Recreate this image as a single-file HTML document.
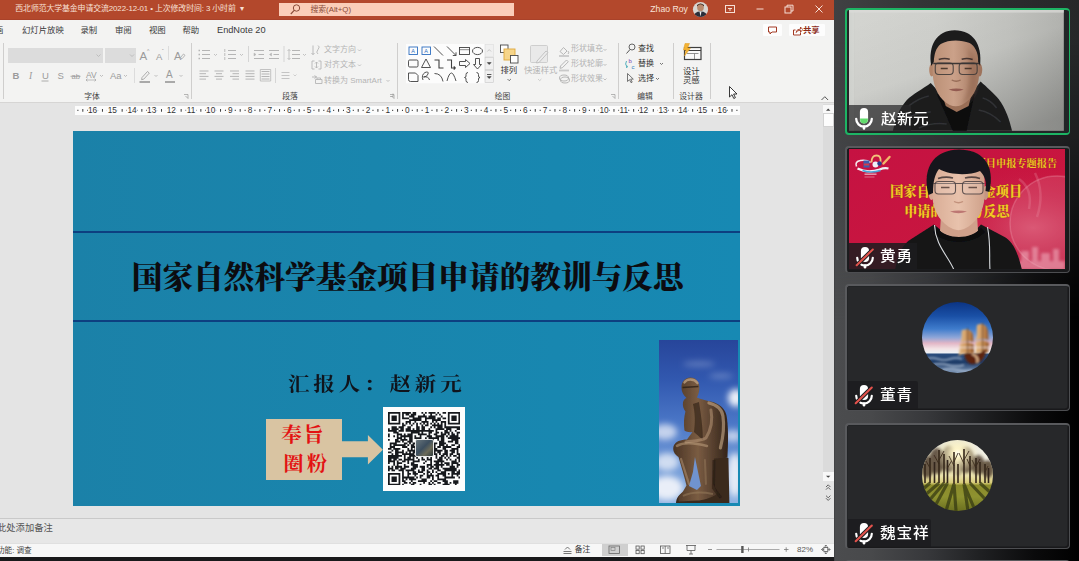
<!DOCTYPE html>
<html lang="zh-CN">
<head>
<meta charset="utf-8">
<title>西北师范大学基金申请交流2022-12-01</title>
<style>
*{box-sizing:border-box;margin:0;padding:0}
html,body{width:1079px;height:561px;overflow:hidden;background:#2a2b2d}
body{position:relative;font-family:"Liberation Sans","Noto Sans CJK SC",sans-serif;font-size:8.5px;color:#333;line-height:1}
.abs{position:absolute}
#ppt{position:absolute;left:0;top:0;width:833.800px;height:556.500px;background:#e4e4e4;overflow:hidden}
#titlebar{position:absolute;left:0;top:0;width:834px;height:19.700px;background:#b3482c;border-bottom:1px solid #a9422a}
#titlebar .t{position:absolute;left:15.300px;top:5.200px;color:#f8e0d6;font-size:7.9px;white-space:nowrap;letter-spacing:-0.1px}
#search{position:absolute;left:278.5px;top:2.5px;width:235px;height:13.800px;background:#fbceb9}
#search span{position:absolute;left:32px;top:3px;font-size:7.8px;color:#8a4b38;white-space:nowrap}
#tabs{position:absolute;left:0;top:19.5px;width:834px;height:21px;background:#f3f3f2}
#tabs span{position:absolute;top:6px;font-size:8.4px;color:#3a3a3a;white-space:nowrap}
#ribbon{position:absolute;left:0;top:40px;width:834px;height:63px;background:#f3f3f2;border-bottom:1px solid #d6d5d4}
.sep{position:absolute;width:1px;background:#cfcecd;top:43px;height:56px}
.glabel{position:absolute;top:93.200px;font-size:7.8px;color:#444;white-space:nowrap;transform:translateX(-50%)}
.dis{color:#b4b4b4}
.rt{position:absolute;font-size:8px;white-space:nowrap}
#slide{position:absolute;left:73px;top:130.500px;width:667px;height:375px;background:linear-gradient(90deg,#1b81a8 0%,#1985ad 45%,#1789b3 100%);overflow:hidden}
#slide .ln{position:absolute;left:0;width:667px;height:2px;background:#0d3f80}
#stitle{position:absolute;left:0;top:0;white-space:nowrap;font-family:"Liberation Serif","Noto Serif CJK SC",serif;font-weight:900;color:#0c0c10}
#rep{position:absolute;white-space:nowrap;font-family:"Liberation Serif","Noto Serif CJK SC",serif;font-weight:700;color:#10141c}
#panel{position:absolute;left:834px;top:0;width:245px;height:561px;background:linear-gradient(90deg,#3e3f41 0,#4b4c4e 1.5px,#48494b 15%,#37383b 38%,#1f2022 60%,#0a0a0b 82%,#000 100%)}
#pov{position:absolute;left:0;top:0;width:245px;height:320px;background:linear-gradient(90deg,#404143 0,#333436 35%,#2b2c2e 70%,#262729 100%);-webkit-mask-image:linear-gradient(180deg,#000 0,#000 40px,rgba(0,0,0,.75) 140px,rgba(0,0,0,.35) 230px,transparent 320px);mask-image:linear-gradient(180deg,#000 0,#000 40px,rgba(0,0,0,.75) 140px,rgba(0,0,0,.35) 230px,transparent 320px)}
.tile{position:absolute;left:11.300px;width:224.500px;height:126.800px;border-style:solid;border-width:2.500px 1.300px 1.300px 2.500px;border-color:#595a5d #4d4e51 #4d4e51 #595a5d;border-radius:4px;background:#27282a;overflow:hidden;box-shadow:inset -1.500px -1.500px 0 0 #19191b,inset 0.500px 0.500px 0 0 #1f2022}
.nm{position:absolute;left:2px;bottom:2px;height:27px;background:rgba(28,28,30,.86);color:#fff;font-size:14.6px;font-weight:500;white-space:nowrap}
.nm span{position:absolute;left:33px;top:6px;font-size:14.400px;letter-spacing:.8px;transform:scaleX(1.09);transform-origin:0 50%}
.nm svg{position:absolute;left:6px;top:4px}
.av{position:absolute;left:74.900px;width:71px;height:71px;border-radius:50%;overflow:hidden}
.redt{font-family:"Liberation Serif","Noto Serif CJK SC",serif;font-weight:700;color:#e31212;font-size:19.5px;letter-spacing:3px;white-space:nowrap}
.gold{font-family:"Liberation Serif","Noto Serif CJK SC",serif;color:#f3c626;white-space:nowrap;text-shadow:0 0 1px #7a3a10}
.rn{position:absolute;top:106.100px;font-size:8.300px;color:#333;transform:translateX(-50%);white-space:nowrap;background:#fcfcfc;padding:0 .5px;z-index:2}
</style>
</head>
<body>
<div id="ppt">
  <div id="titlebar">
    <div class="t">西北师范大学基金申请交流2022-12-01 • 上次修改时间: 3 小时前 &nbsp;▾</div>
    <div id="search"><span>搜索(Alt+Q)</span></div>
    <svg class="abs" style="left:287px;top:2px" width="16" height="15" viewBox="0 0 16 15"><circle cx="9.500" cy="6" r="3.200" fill="none" stroke="#8a4b38" stroke-width="1"/><path d="M7.200 8.400L3.800 12" stroke="#8a4b38" stroke-width="1.100"/></svg>
<div class="abs" style="left:650.300px;top:4.800px;font-size:8.700px;color:#f8e2d8;white-space:nowrap">Zhao Roy</div>
<svg class="abs" style="left:692px;top:1px" width="17" height="17" viewBox="0 0 17 17">
  <defs><clipPath id="avc"><circle cx="8.500" cy="8.500" r="7.600"/></clipPath></defs>
  <g clip-path="url(#avc)"><rect width="17" height="17" fill="#d9d6d2"/><ellipse cx="8.500" cy="6.500" rx="3.300" ry="3.800" fill="#b98a6e"/><path d="M5 5.500q3.500-4.500 7 0v-1.500q-3.500-3-7 0z" fill="#3a2a22"/><path d="M1.500 17q0-6.500 7-6.500t7 6.500z" fill="#2b2e3a"/><path d="M7.500 10.500l1 5l1-5z" fill="#f0f0f0"/></g>
</svg>
<svg class="abs" style="left:724px;top:3px" width="12" height="12" viewBox="0 0 12 12"><rect x="1.500" y="2.500" width="9" height="7" fill="none" stroke="#f6ded5" stroke-width="1"/><path d="M4 5.500h4M6 5.500v2.500" stroke="#f6ded5" stroke-width="1"/></svg>
<svg class="abs" style="left:754px;top:3px" width="12" height="12" viewBox="0 0 12 12"><path d="M2.500 6h7" stroke="#f6ded5" stroke-width="1"/></svg>
<svg class="abs" style="left:783px;top:3px" width="12" height="12" viewBox="0 0 12 12"><rect x="2" y="4" width="6" height="6" fill="none" stroke="#f6ded5" stroke-width="1"/><path d="M4 4V2.200h6V8H8" fill="none" stroke="#f6ded5" stroke-width="1"/></svg>
<svg class="abs" style="left:813px;top:3px" width="12" height="12" viewBox="0 0 12 12"><path d="M2.500 2.500l7 7M9.500 2.500l-7 7" stroke="#f6ded5" stroke-width="1"/></svg>

  </div>
  <div id="tabs">
    <span style="left:-5px">画</span>
    <span style="left:22px">幻灯片放映</span>
    <span style="left:80.5px">录制</span>
    <span style="left:115px">审阅</span>
    <span style="left:149px">视图</span>
    <span style="left:182.5px">帮助</span>
    <span style="left:217px;font-size:9.2px;top:6.200px">EndNote 20</span>
    <div class="abs" style="left:763px;top:4.500px;width:18.600px;height:12.300px;background:#fdfdfd;border-radius:1px"></div>
<svg class="abs" style="left:766.500px;top:6.500px" width="11" height="9" viewBox="0 0 11 9"><path d="M1.500 1h8v5h-4.500l-2 2v-2h-1.500z" fill="none" stroke="#a33a24" stroke-width="1"/></svg>
<div class="abs" style="left:788.600px;top:4.500px;width:36.300px;height:12.300px;background:#fdfdfd;border-radius:1px"></div>
<svg class="abs" style="left:791.500px;top:6px" width="11" height="10" viewBox="0 0 11 10"><path d="M3.500 4h-2v5h7v-2.500" fill="none" stroke="#a33a24" stroke-width="1"/><path d="M4 6.500q.5-3.500 4.500-3.500v-2l2.300 2.600l-2.300 2.600v-2q-3 0-4.500 2.300z" fill="none" stroke="#a33a24" stroke-width=".9"/></svg>
<span style="left:803px;top:6.200px;color:#8f2f1c;font-weight:700;font-size:8.400px">共享</span>

  </div>
  <div id="ribbon"></div>
  <!-- separators -->
<div class="sep" style="left:3px"></div><div class="sep" style="left:191px"></div><div class="sep" style="left:397px"></div><div class="sep" style="left:618px"></div><div class="sep" style="left:672.500px"></div><div class="sep" style="left:709.500px"></div>
<!-- font group -->
<div class="abs" style="left:8px;top:48px;width:95px;height:14.500px;background:#dcdcdc"></div>
<div class="abs" style="left:104.500px;top:48px;width:31.500px;height:14.500px;background:#dcdcdc"></div>
<svg class="abs" style="left:0;top:40px" width="834" height="64" viewBox="0 40 834 64" fill="none" stroke-linecap="butt">
  <g stroke="#b9b9b9" stroke-width=".9">
    <path d="M96.500 54.500l2 2l2-2M130 54.500l2 2l2-2"/>
  </g>
  <!-- bullets / numbering / indents / line spacing -->
  <g stroke="#b5b5b5" stroke-width="1">
    <path d="M202 50.500h8M202 54.500h8M202 58.500h8"/><path d="M198.500 50.500h1.500M198.500 54.500h1.500M198.500 58.500h1.500" stroke-width="1.600"/>
    <path d="M214 54l1.500 1.500l1.500-1.500" stroke-width=".8"/>
    <path d="M228 50.500h8M228 54.500h8M228 58.500h8"/><path d="M224.800 49v3M224.800 53v3M224.800 57v3" stroke-width=".9"/>
    <path d="M240 54l1.500 1.500l1.500-1.500" stroke-width=".8"/>
    <path d="M248.500 46v16" stroke="#d5d5d5"/>
    <path d="M254 50.500h10M258.500 54.500h5.500M254 58.500h10"/><path d="M254 53l2 1.500l-2 1.500z" fill="#b5b5b5" stroke-width=".5"/>
    <path d="M269 50.500h10M273.500 54.500h5.500M269 58.500h10"/><path d="M271.500 53l-2 1.500l2 1.500z" fill="#b5b5b5" stroke-width=".5"/>
    <path d="M284 46v16" stroke="#d5d5d5"/>
    <path d="M292 50.500h8M292 54.500h8M292 58.500h8"/><path d="M289 49.500v10M287.500 51l1.500-1.500l1.500 1.500M287.500 58l1.500 1.500l1.500-1.500" stroke-width=".8"/>
    <path d="M303 54l1.500 1.500l1.500-1.500" stroke-width=".8"/>
    <!-- alignment row -->
    <path d="M199.500 71h9M199.500 73.700h6.500M199.500 76.400h9M199.500 79.100h6.500"/>
    <path d="M214.500 71h9M216 73.700h6M214.500 76.400h9M216 79.100h6"/>
    <path d="M230 71h9M232.500 73.700h6.500M230 76.400h9M232.500 79.100h6.500"/>
    <path d="M245.500 71h9M245.500 73.700h9M245.500 76.400h9M245.500 79.100h9"/>
    <path d="M261.500 71.500h8M261.500 74h8M261.500 76.500h8M261.500 79h8"/><path d="M260.300 69.500h10.400M260.300 81h10.400M260.300 69.500v11.500M270.700 69.500v11.500" stroke-width=".8"/>
    <path d="M275.500 68v15" stroke="#d5d5d5"/>
    <path d="M281.500 72.500h8M281.500 75.500h8M281.500 78.500h8" stroke="#c4c4c4"/><path d="M293.500 74.500l1.500 1.500l1.500-1.500" stroke-width=".8" stroke="#c4c4c4"/>
    <!-- text direction icons -->
    <path d="M313 45.500v9M311.500 53l1.500 1.700l1.500-1.700M318 45.500q2.500 1 0 4q-2.500 3 0 4.500" stroke-width=".9"/>
    <path d="M312 61v8h2.500M321 61v8h-2.500M312 61h2.500M321 61h-2.500M316.500 62v6M315 63.500l1.500-1.500l1.500 1.500M315 66.500l1.500 1.500l1.500-1.500" stroke-width=".9"/>
    <path d="M312 77h5M314.500 75.500l2 1.500l-2 1.500M315.500 79.500h6.500v4h-6.500zM317 79.500v-1.500h3.500v1.500" stroke-width=".9"/>
    <path d="M358 49.500l1.500 1.500l1.500-1.500M358 64.500l1.500 1.500l1.500-1.500M386.500 80l1.500 1.500l1.500-1.500" stroke-width=".8"/>
  </g>
  <!-- dialog launchers -->
  <g stroke="#9a9a9a" stroke-width=".7">
    <path d="M184 94.500h4v4M185.500 96l2.500 2.500M393 96.500h-3M393 96.500v-3" />
    <path d="M390 94.500h4v4M391.500 96l2.500 2.500"/>
    <path d="M611 94.500h4v4M612.500 96l2.500 2.500"/>
  </g>
  <!-- font group icons row1 -->
  <g fill="#9b9b9b" stroke="none" font-family="Liberation Sans,sans-serif">
    <text x="139.500" y="59.500" font-size="11.500">A</text><text x="147" y="52.500" font-size="5">^</text>
    <text x="156" y="59.500" font-size="9.500">A</text><text x="162" y="52.500" font-size="5">ˇ</text>
    <text x="174" y="59.500" font-size="11">A</text>
    <text x="12.500" y="79" font-size="9.500" font-weight="700">B</text>
    <text x="29" y="79" font-size="9.500" font-style="italic" font-family="Liberation Serif,serif">I</text>
    <text x="42" y="79" font-size="9.500">U</text>
    <text x="57.500" y="79" font-size="9.500">S</text>
    <text x="71.500" y="79" font-size="7.500">ab</text>
    <text x="86" y="77.500" font-size="8.500">AV</text>
    <text x="110" y="79" font-size="9.500">Aa</text>
    <text x="166" y="78" font-size="10">A</text>
  </g>
  <g stroke="#9b9b9b" stroke-width=".8">
    <path d="M168.500 46v14" stroke="#d5d5d5"/>
    <path d="M180.500 57.500l3-3.500l1.500 1.300l-3 3.500z" stroke-width=".7"/>
    <path d="M41.500 81h7"/><path d="M70.500 76.300h10"/><path d="M86 80h10M87.500 78.700l-1.500 1.300l1.500 1.300M94.500 78.700l1.500 1.300l-1.500 1.300" stroke-width=".6"/>
    <path d="M100 75l1.500 1.500l1.500-1.500M124 75l1.500 1.500l1.500-1.500M154.500 75l1.500 1.500l1.500-1.500M179.500 75l1.500 1.500l1.500-1.500" stroke-width=".8" stroke="#b0b0b0"/>
    <path d="M134.500 68v15" stroke="#d5d5d5"/>
    <path d="M142 77.500l5.500-6l1.800 1.600l-5.500 6l-2.200.6z" stroke-width=".8"/>
  </g>
  <rect x="139.500" y="81" width="10.500" height="2" fill="#a9a9a9"/>
  <rect x="165" y="81" width="10" height="2" fill="#a9a9a9"/>
  <!-- shapes gallery -->
  <rect x="406" y="44" width="87.500" height="39.300" fill="#fcfcfc"/>
  <rect x="485" y="44.500" width="8.300" height="12.300" fill="#f0f0f0" stroke="#dadada" stroke-width=".6"/>
  <rect x="485" y="57.400" width="8.300" height="12.300" fill="#f0f0f0" stroke="#c6c6c6" stroke-width=".6"/>
  <rect x="485" y="70.300" width="8.300" height="12.300" fill="#f0f0f0" stroke="#c6c6c6" stroke-width=".6"/>
  <path d="M487.300 51.500l1.900-1.900l1.900 1.900" stroke="#c4c4c4" stroke-width=".9"/>
  <path d="M487.300 62.600l1.900 1.900l1.900-1.900z" fill="#444" stroke="#444" stroke-width=".6"/>
  <path d="M487 74.500h4.400" stroke="#444" stroke-width=".9"/><path d="M487.300 76.600l1.900 1.900l1.900-1.900z" fill="#444" stroke="#444" stroke-width=".6"/>
  <g stroke="#3f3f3f" stroke-width=".9">
    <rect x="409" y="47" width="8.500" height="7.500" stroke="#2f6fc0"/><rect x="422" y="47" width="8.500" height="7.500" stroke="#2f6fc0"/>
    <path d="M434 46.500l9 9M447 46.500l9 9M456 55.500v-3.200M456 55.500h-3.200"/>
    <rect x="459.500" y="47.500" width="10" height="7"/><path d="M459.500 49.700h10" stroke-width=".6"/>
    <ellipse cx="477.500" cy="51" rx="5" ry="3.600"/>
    <rect x="408.500" y="60" width="9.500" height="7" rx="1.200"/>
    <path d="M426 59l4.500 8.500h-9z"/>
    <path d="M434.500 60h4.500v8h4.500" stroke-width="1.100"/>
    <path d="M447 60h4.500v8h4M455.500 68l-1.800-1.500M455.500 68l-1.800 1.500" stroke-width="1.100"/>
    <path d="M459.500 61.500h6v-2l4.500 4l-4.500 4v-2h-6z"/>
    <path d="M475.500 58.500h4v6h2l-4 4.500l-4-4.500h2z"/>
    <path d="M408.500 73h7l2.500 2.500v6h-7.500q-2 0-2-2z"/>
    <path d="M423 80q-2-5 2-7.500q4-1.500 3 1.500q-1 3-4.500 3q5-1 6 3"/>
    <path d="M434.500 73.500q7 0 8.500 8"/>
    <path d="M447 81q2-8 4.500-8q2 0 4.500 8"/>
    <path d="M468 72.500q-2 0-2 2v1.500q0 1.500-1.500 1.500q1.500 0 1.500 1.500v1.500q0 2 2 2"/>
    <path d="M476.500 72.500q2 0 2 2v1.500q0 1.500 1.500 1.500q-1.500 0-1.500 1.500v1.500q0 2-2 2"/>
  </g>
  <text x="411.200" y="53" font-size="5.500" fill="#2f6fc0" stroke="none" font-family="Liberation Sans,sans-serif">A</text>
  <text x="424.300" y="53" font-size="5.500" fill="#2f6fc0" stroke="none" font-family="Liberation Sans,sans-serif">A</text>
  <!-- arrange icon -->
  <rect x="500.500" y="45" width="7.500" height="7.500" fill="#fdfdfd" stroke="#4a4a4a" stroke-width=".9"/>
  <rect x="504" y="49" width="11" height="11" fill="#f6d58a" stroke="#e0a83a" stroke-width=".9"/>
  <rect x="510.500" y="55.500" width="7.500" height="7.500" fill="#fdfdfd" stroke="#4a4a4a" stroke-width=".9"/>
  <path d="M507.500 79l1.700 1.700l1.700-1.700" stroke="#555" stroke-width=".8"/>
  <!-- quick styles -->
  <rect x="530.500" y="45.500" width="17" height="17" rx="1" fill="#e9e9e9" stroke="#c9c9c9" stroke-width=".9"/>
  <path d="M537 61l9-10l2 1.500l-9 10l-2.500 .5z" fill="#ececec" stroke="#bdbdbd" stroke-width=".9"/>
  <path d="M538 79l1.700 1.700l1.700-1.700" stroke="#c4c4c4" stroke-width=".8"/>
  <!-- shape fill/outline/effects icons -->
  <g stroke="#b0b0b0" stroke-width=".9">
    <path d="M560 51.500l3.500-4l3.500 3.500l-3.500 3.500zM568 51q1.500 2 0 3"/><path d="M559 56h10" stroke-width="1.800" stroke="#c9c9c9"/>
    <path d="M560.500 66l6-6l1.800 1.800l-6 6l-2.300.5z"/><path d="M559 70.500h10" stroke-width="1.800" stroke="#c9c9c9"/>
    <ellipse cx="564" cy="78" rx="4.500" ry="3"/><ellipse cx="565" cy="80" rx="4.500" ry="3"/>
    <path d="M603.500 49l1.500 1.500l1.500-1.500M603.500 64l1.500 1.500l1.500-1.500M603.500 78.500l1.500 1.500l1.500-1.500" stroke-width=".8"/>
  </g>
  <!-- editing icons -->
  <circle cx="632" cy="47" r="3" stroke="#555" stroke-width=".9"/><path d="M630 49.500l-3.500 4" stroke="#555" stroke-width="1"/>
  <text x="628.500" y="62.500" font-size="6" fill="#7a3fb0" stroke="none" font-family="Liberation Sans,sans-serif">b</text>
  <text x="631.500" y="68.500" font-size="6" fill="#2f7fc0" stroke="none" font-family="Liberation Sans,sans-serif">c</text>
  <path d="M626.500 61q-2 3 .5 6M626 67.500l1.300-.3l-.3-1.500" stroke="#2f9fb0" stroke-width=".8"/>
  <path d="M627.500 73.500v8l2-1.800l1.500 3l1.200-.6l-1.500-3h2.600z" stroke="#555" stroke-width=".8"/>
  <path d="M660 63l1.500 1.500l1.500-1.500M656 78l1.500 1.500l1.500-1.500" stroke="#555" stroke-width=".8"/>
  <!-- designer icon -->
  <rect x="684.500" y="47.500" width="16.500" height="12" fill="#fafafa" stroke="#3f3f3f" stroke-width="1.200"/>
  <path d="M684.500 50.500h16.500" stroke="#3f3f3f" stroke-width="1"/><path d="M687 53.500h11.500M694.500 53.500v5.500" stroke="#7a7a7a" stroke-width=".8"/>
  <path d="M685 43.500h4.500l-2 4.500h3l-6 8l1.500-6h-2.500z" fill="#f2b234" stroke="#e39a1a" stroke-width=".5"/>
  <!-- mouse cursor -->
  <path d="M729.500 86.500v10.500l2.500-2.300l1.800 3.800l1.600-.8l-1.800-3.700h3.400z" fill="#fff" stroke="#222" stroke-width=".9"/>
  <!-- collapse -->
  <path d="M821.500 100l3.300-3.300l3.300 3.300" stroke="#555" stroke-width="1"/>
</svg>
<!-- ribbon texts -->
<span class="rt dis" style="left:324px;top:46px">文字方向</span>
<span class="rt dis" style="left:324px;top:61px">对齐文本</span>
<span class="rt dis" style="left:324px;top:76.500px">转换为 SmartArt</span>
<span class="rt" style="left:500.500px;top:66px;font-size:8.400px;color:#333">排列</span>
<span class="rt dis" style="left:524px;top:66px;font-size:8.400px">快速样式</span>
<span class="rt dis" style="left:571px;top:45px">形状填充</span>
<span class="rt dis" style="left:571px;top:59.500px">形状轮廓</span>
<span class="rt dis" style="left:571px;top:74.500px">形状效果</span>
<span class="rt" style="left:638px;top:44.500px;color:#333">查找</span>
<span class="rt" style="left:638px;top:60px;color:#333">替换</span>
<span class="rt" style="left:638px;top:74.500px;color:#333">选择</span>
<span class="rt" style="left:683px;top:66.500px;font-size:8.400px;color:#333">设计</span>
<span class="rt" style="left:683px;top:75.500px;font-size:8.400px;color:#333">灵感</span>
<span class="glabel" style="left:92px">字体</span>
<span class="glabel" style="left:290px">段落</span>
<span class="glabel" style="left:502.500px">绘图</span>
<span class="glabel" style="left:645px">编辑</span>
<span class="glabel" style="left:691px">设计器</span>

  <div class="abs" style="left:75px;top:105.700px;width:665px;height:9.100px;background:#fcfcfc"></div>
<span class="rn" style="left:92.6px">16</span>
<span class="rn" style="left:112.3px">15</span>
<span class="rn" style="left:132.0px">14</span>
<span class="rn" style="left:151.7px">13</span>
<span class="rn" style="left:171.3px">12</span>
<span class="rn" style="left:191.0px">11</span>
<span class="rn" style="left:210.7px">10</span>
<span class="rn" style="left:230.4px">9</span>
<span class="rn" style="left:250.0px">8</span>
<span class="rn" style="left:269.7px">7</span>
<span class="rn" style="left:289.4px">6</span>
<span class="rn" style="left:309.0px">5</span>
<span class="rn" style="left:328.7px">4</span>
<span class="rn" style="left:348.4px">3</span>
<span class="rn" style="left:368.1px">2</span>
<span class="rn" style="left:387.7px">1</span>
<span class="rn" style="left:407.4px">0</span>
<span class="rn" style="left:427.1px">1</span>
<span class="rn" style="left:446.7px">2</span>
<span class="rn" style="left:466.4px">3</span>
<span class="rn" style="left:486.1px">4</span>
<span class="rn" style="left:505.8px">5</span>
<span class="rn" style="left:525.4px">6</span>
<span class="rn" style="left:545.1px">7</span>
<span class="rn" style="left:564.8px">8</span>
<span class="rn" style="left:584.4px">9</span>
<span class="rn" style="left:604.1px">10</span>
<span class="rn" style="left:623.8px">11</span>
<span class="rn" style="left:643.5px">12</span>
<span class="rn" style="left:663.1px">13</span>
<span class="rn" style="left:682.8px">14</span>
<span class="rn" style="left:702.5px">15</span>
<span class="rn" style="left:722.2px">16</span>
<svg class="abs" style="left:0;top:0" width="834" height="120"><path d="M82.81 109v2.700M77.89 109.800v1.100M87.73 109.800v1.100M102.48 109v2.700M97.57 109.800v1.100M107.40 109.800v1.100M122.16 109v2.700M117.24 109.800v1.100M127.07 109.800v1.100M141.83 109v2.700M136.91 109.800v1.100M146.75 109.800v1.100M161.50 109v2.700M156.58 109.800v1.100M166.42 109.800v1.100M181.17 109v2.700M176.25 109.800v1.100M186.09 109.800v1.100M200.84 109v2.700M195.93 109.800v1.100M205.76 109.800v1.100M220.52 109v2.700M215.60 109.800v1.100M225.43 109.800v1.100M240.19 109v2.700M235.27 109.800v1.100M245.11 109.800v1.100M259.86 109v2.700M254.94 109.800v1.100M264.78 109.800v1.100M279.53 109v2.700M274.61 109.800v1.100M284.45 109.800v1.100M299.20 109v2.700M294.29 109.800v1.100M304.12 109.800v1.100M318.88 109v2.700M313.96 109.800v1.100M323.79 109.800v1.100M338.55 109v2.700M333.63 109.800v1.100M343.47 109.800v1.100M358.22 109v2.700M353.30 109.800v1.100M363.14 109.800v1.100M377.89 109v2.700M372.97 109.800v1.100M382.81 109.800v1.100M397.56 109v2.700M392.65 109.800v1.100M402.48 109.800v1.100M417.24 109v2.700M412.32 109.800v1.100M422.15 109.800v1.100M436.91 109v2.700M431.99 109.800v1.100M441.83 109.800v1.100M456.58 109v2.700M451.66 109.800v1.100M461.50 109.800v1.100M476.25 109v2.700M471.33 109.800v1.100M481.17 109.800v1.100M495.92 109v2.700M491.01 109.800v1.100M500.84 109.800v1.100M515.60 109v2.700M510.68 109.800v1.100M520.51 109.800v1.100M535.27 109v2.700M530.35 109.800v1.100M540.19 109.800v1.100M554.94 109v2.700M550.02 109.800v1.100M559.86 109.800v1.100M574.61 109v2.700M569.69 109.800v1.100M579.53 109.800v1.100M594.28 109v2.700M589.37 109.800v1.100M599.20 109.800v1.100M613.96 109v2.700M609.04 109.800v1.100M618.87 109.800v1.100M633.63 109v2.700M628.71 109.800v1.100M638.55 109.800v1.100M653.30 109v2.700M648.38 109.800v1.100M658.22 109.800v1.100M672.97 109v2.700M668.05 109.800v1.100M677.89 109.800v1.100M692.64 109v2.700M687.73 109.800v1.100M697.56 109.800v1.100M712.32 109v2.700M707.40 109.800v1.100M717.23 109.800v1.100M731.99 109v2.700M727.07 109.800v1.100M736.91 109.800v1.100" stroke="#444" stroke-width="1.050" fill="none"/></svg>
  <div id="slide">
    <div class="ln" style="top:100.300px"></div>
    <div class="ln" style="top:189.400px"></div>
    <div id="stitle" style="left:58.800px;top:132.500px;font-size:30.670px">国家自然科学基金项目申请的教训与反思</div>
    <div id="rep" style="left:215px;top:244.300px;font-size:19px;letter-spacing:3.450px;transform:scaleX(1.13);transform-origin:0 50%">汇报人：赵新元</div>
    
<div class="abs" style="left:193.400px;top:288.300px;width:76px;height:61.100px;background:#d9c4a2"></div>
<svg class="abs" style="left:269px;top:300px" width="46" height="40" viewBox="0 0 46 40"><path d="M0 10.200H25.900V4L40.900 18.700L25.900 33.400V26.300H0z" fill="#d9c4a2"/></svg>
<div class="abs redt" style="left:208.300px;top:294px;font-size:20.500px;letter-spacing:1.500px">奉旨</div>
<div class="abs redt" style="left:210.500px;top:323.800px;font-size:20px;letter-spacing:3.500px">圈粉</div>
<div class="abs" style="left:310.300px;top:276.800px;width:81.400px;height:83.500px;background:#fdfdfd">
<svg class="abs" style="left:4.600px;top:4.600px" width="72.200" height="73.600" viewBox="0 0 71 71" preserveAspectRatio="none"><path d="M0.00 0.00h12.12v1.73h-12.12zM13.85 0.00h8.66v1.73h-8.66zM24.24 0.00h3.46v1.73h-3.46zM32.90 0.00h1.73v1.73h-1.73zM36.37 0.00h1.73v1.73h-1.73zM39.83 0.00h6.93v1.73h-6.93zM48.49 0.00h1.73v1.73h-1.73zM53.68 0.00h3.46v1.73h-3.46zM58.88 0.00h12.12v1.73h-12.12zM0.00 1.73h1.73v1.73h-1.73zM10.39 1.73h1.73v1.73h-1.73zM13.85 1.73h1.73v1.73h-1.73zM17.32 1.73h3.46v1.73h-3.46zM22.51 1.73h5.20v1.73h-5.20zM34.63 1.73h1.73v1.73h-1.73zM41.56 1.73h1.73v1.73h-1.73zM46.76 1.73h1.73v1.73h-1.73zM50.22 1.73h1.73v1.73h-1.73zM58.88 1.73h1.73v1.73h-1.73zM69.27 1.73h1.73v1.73h-1.73zM0.00 3.46h1.73v1.73h-1.73zM3.46 3.46h5.20v1.73h-5.20zM10.39 3.46h1.73v1.73h-1.73zM13.85 3.46h1.73v1.73h-1.73zM20.78 3.46h5.20v1.73h-5.20zM29.44 3.46h8.66v1.73h-8.66zM39.83 3.46h6.93v1.73h-6.93zM51.95 3.46h1.73v1.73h-1.73zM58.88 3.46h1.73v1.73h-1.73zM62.34 3.46h5.20v1.73h-5.20zM69.27 3.46h1.73v1.73h-1.73zM0.00 5.20h1.73v1.73h-1.73zM3.46 5.20h5.20v1.73h-5.20zM10.39 5.20h1.73v1.73h-1.73zM13.85 5.20h6.93v1.73h-6.93zM24.24 5.20h8.66v1.73h-8.66zM36.37 5.20h10.39v1.73h-10.39zM48.49 5.20h3.46v1.73h-3.46zM53.68 5.20h3.46v1.73h-3.46zM58.88 5.20h1.73v1.73h-1.73zM62.34 5.20h5.20v1.73h-5.20zM69.27 5.20h1.73v1.73h-1.73zM0.00 6.93h1.73v1.73h-1.73zM3.46 6.93h5.20v1.73h-5.20zM10.39 6.93h1.73v1.73h-1.73zM20.78 6.93h12.12v1.73h-12.12zM36.37 6.93h1.73v1.73h-1.73zM43.29 6.93h8.66v1.73h-8.66zM58.88 6.93h1.73v1.73h-1.73zM62.34 6.93h5.20v1.73h-5.20zM69.27 6.93h1.73v1.73h-1.73zM0.00 8.66h1.73v1.73h-1.73zM10.39 8.66h1.73v1.73h-1.73zM17.32 8.66h5.20v1.73h-5.20zM25.98 8.66h1.73v1.73h-1.73zM32.90 8.66h6.93v1.73h-6.93zM43.29 8.66h1.73v1.73h-1.73zM46.76 8.66h1.73v1.73h-1.73zM51.95 8.66h5.20v1.73h-5.20zM58.88 8.66h1.73v1.73h-1.73zM69.27 8.66h1.73v1.73h-1.73zM0.00 10.39h12.12v1.73h-12.12zM13.85 10.39h1.73v1.73h-1.73zM17.32 10.39h1.73v1.73h-1.73zM20.78 10.39h1.73v1.73h-1.73zM24.24 10.39h1.73v1.73h-1.73zM27.71 10.39h1.73v1.73h-1.73zM31.17 10.39h1.73v1.73h-1.73zM34.63 10.39h1.73v1.73h-1.73zM38.10 10.39h1.73v1.73h-1.73zM41.56 10.39h1.73v1.73h-1.73zM45.02 10.39h1.73v1.73h-1.73zM48.49 10.39h1.73v1.73h-1.73zM51.95 10.39h1.73v1.73h-1.73zM55.41 10.39h1.73v1.73h-1.73zM58.88 10.39h12.12v1.73h-12.12zM13.85 12.12h3.46v1.73h-3.46zM22.51 12.12h1.73v1.73h-1.73zM27.71 12.12h1.73v1.73h-1.73zM32.90 12.12h1.73v1.73h-1.73zM36.37 12.12h3.46v1.73h-3.46zM43.29 12.12h10.39v1.73h-10.39zM55.41 12.12h1.73v1.73h-1.73zM3.46 13.85h5.20v1.73h-5.20zM10.39 13.85h5.20v1.73h-5.20zM19.05 13.85h3.46v1.73h-3.46zM27.71 13.85h3.46v1.73h-3.46zM32.90 13.85h3.46v1.73h-3.46zM41.56 13.85h1.73v1.73h-1.73zM45.02 13.85h1.73v1.73h-1.73zM48.49 13.85h5.20v1.73h-5.20zM55.41 13.85h15.59v1.73h-15.59zM0.00 15.59h1.73v1.73h-1.73zM3.46 15.59h6.93v1.73h-6.93zM12.12 15.59h3.46v1.73h-3.46zM17.32 15.59h5.20v1.73h-5.20zM24.24 15.59h1.73v1.73h-1.73zM27.71 15.59h3.46v1.73h-3.46zM32.90 15.59h3.46v1.73h-3.46zM39.83 15.59h1.73v1.73h-1.73zM46.76 15.59h8.66v1.73h-8.66zM57.15 15.59h5.20v1.73h-5.20zM67.54 15.59h3.46v1.73h-3.46zM0.00 17.32h8.66v1.73h-8.66zM10.39 17.32h5.20v1.73h-5.20zM17.32 17.32h27.71v1.73h-27.71zM46.76 17.32h1.73v1.73h-1.73zM55.41 17.32h3.46v1.73h-3.46zM60.61 17.32h1.73v1.73h-1.73zM65.80 17.32h1.73v1.73h-1.73zM5.20 19.05h5.20v1.73h-5.20zM22.51 19.05h8.66v1.73h-8.66zM32.90 19.05h1.73v1.73h-1.73zM39.83 19.05h3.46v1.73h-3.46zM46.76 19.05h3.46v1.73h-3.46zM51.95 19.05h1.73v1.73h-1.73zM55.41 19.05h5.20v1.73h-5.20zM62.34 19.05h1.73v1.73h-1.73zM67.54 19.05h3.46v1.73h-3.46zM0.00 20.78h1.73v1.73h-1.73zM8.66 20.78h5.20v1.73h-5.20zM15.59 20.78h1.73v1.73h-1.73zM19.05 20.78h5.20v1.73h-5.20zM29.44 20.78h8.66v1.73h-8.66zM39.83 20.78h1.73v1.73h-1.73zM45.02 20.78h3.46v1.73h-3.46zM51.95 20.78h5.20v1.73h-5.20zM58.88 20.78h1.73v1.73h-1.73zM62.34 20.78h3.46v1.73h-3.46zM67.54 20.78h1.73v1.73h-1.73zM0.00 22.51h1.73v1.73h-1.73zM5.20 22.51h1.73v1.73h-1.73zM8.66 22.51h1.73v1.73h-1.73zM12.12 22.51h12.12v1.73h-12.12zM25.98 22.51h1.73v1.73h-1.73zM31.17 22.51h1.73v1.73h-1.73zM38.10 22.51h5.20v1.73h-5.20zM46.76 22.51h8.66v1.73h-8.66zM57.15 22.51h1.73v1.73h-1.73zM60.61 22.51h8.66v1.73h-8.66zM8.66 24.24h5.20v1.73h-5.20zM15.59 24.24h1.73v1.73h-1.73zM20.78 24.24h3.46v1.73h-3.46zM25.98 24.24h6.93v1.73h-6.93zM36.37 24.24h1.73v1.73h-1.73zM39.83 24.24h10.39v1.73h-10.39zM51.95 24.24h3.46v1.73h-3.46zM58.88 24.24h12.12v1.73h-12.12zM0.00 25.98h1.73v1.73h-1.73zM6.93 25.98h3.46v1.73h-3.46zM12.12 25.98h6.93v1.73h-6.93zM20.78 25.98h3.46v1.73h-3.46zM27.71 25.98h8.66v1.73h-8.66zM41.56 25.98h3.46v1.73h-3.46zM48.49 25.98h1.73v1.73h-1.73zM51.95 25.98h3.46v1.73h-3.46zM62.34 25.98h6.93v1.73h-6.93zM6.93 27.71h5.20v1.73h-5.20zM13.85 27.71h1.73v1.73h-1.73zM19.05 27.71h5.20v1.73h-5.20zM27.71 27.71h5.20v1.73h-5.20zM34.63 27.71h3.46v1.73h-3.46zM39.83 27.71h5.20v1.73h-5.20zM50.22 27.71h5.20v1.73h-5.20zM58.88 27.71h5.20v1.73h-5.20zM65.80 27.71h3.46v1.73h-3.46zM1.73 29.44h6.93v1.73h-6.93zM15.59 29.44h3.46v1.73h-3.46zM20.78 29.44h1.73v1.73h-1.73zM24.24 29.44h3.46v1.73h-3.46zM29.44 29.44h1.73v1.73h-1.73zM32.90 29.44h6.93v1.73h-6.93zM43.29 29.44h5.20v1.73h-5.20zM50.22 29.44h6.93v1.73h-6.93zM65.80 29.44h3.46v1.73h-3.46zM1.73 31.17h1.73v1.73h-1.73zM5.20 31.17h12.12v1.73h-12.12zM19.05 31.17h1.73v1.73h-1.73zM22.51 31.17h3.46v1.73h-3.46zM29.44 31.17h6.93v1.73h-6.93zM38.10 31.17h3.46v1.73h-3.46zM43.29 31.17h3.46v1.73h-3.46zM50.22 31.17h5.20v1.73h-5.20zM57.15 31.17h1.73v1.73h-1.73zM62.34 31.17h3.46v1.73h-3.46zM69.27 31.17h1.73v1.73h-1.73zM1.73 32.90h5.20v1.73h-5.20zM13.85 32.90h5.20v1.73h-5.20zM22.51 32.90h6.93v1.73h-6.93zM31.17 32.90h1.73v1.73h-1.73zM41.56 32.90h5.20v1.73h-5.20zM48.49 32.90h3.46v1.73h-3.46zM53.68 32.90h8.66v1.73h-8.66zM67.54 32.90h3.46v1.73h-3.46zM0.00 34.63h3.46v1.73h-3.46zM5.20 34.63h6.93v1.73h-6.93zM19.05 34.63h1.73v1.73h-1.73zM22.51 34.63h1.73v1.73h-1.73zM25.98 34.63h1.73v1.73h-1.73zM29.44 34.63h6.93v1.73h-6.93zM39.83 34.63h3.46v1.73h-3.46zM45.02 34.63h3.46v1.73h-3.46zM53.68 34.63h3.46v1.73h-3.46zM62.34 34.63h6.93v1.73h-6.93zM3.46 36.37h1.73v1.73h-1.73zM6.93 36.37h3.46v1.73h-3.46zM13.85 36.37h1.73v1.73h-1.73zM19.05 36.37h8.66v1.73h-8.66zM31.17 36.37h5.20v1.73h-5.20zM38.10 36.37h5.20v1.73h-5.20zM45.02 36.37h8.66v1.73h-8.66zM55.41 36.37h3.46v1.73h-3.46zM60.61 36.37h5.20v1.73h-5.20zM67.54 36.37h1.73v1.73h-1.73zM0.00 38.10h3.46v1.73h-3.46zM6.93 38.10h8.66v1.73h-8.66zM17.32 38.10h1.73v1.73h-1.73zM20.78 38.10h1.73v1.73h-1.73zM24.24 38.10h6.93v1.73h-6.93zM34.63 38.10h1.73v1.73h-1.73zM38.10 38.10h8.66v1.73h-8.66zM48.49 38.10h3.46v1.73h-3.46zM55.41 38.10h3.46v1.73h-3.46zM62.34 38.10h3.46v1.73h-3.46zM67.54 38.10h1.73v1.73h-1.73zM3.46 39.83h1.73v1.73h-1.73zM6.93 39.83h3.46v1.73h-3.46zM13.85 39.83h12.12v1.73h-12.12zM29.44 39.83h1.73v1.73h-1.73zM34.63 39.83h1.73v1.73h-1.73zM38.10 39.83h1.73v1.73h-1.73zM41.56 39.83h1.73v1.73h-1.73zM45.02 39.83h3.46v1.73h-3.46zM50.22 39.83h1.73v1.73h-1.73zM53.68 39.83h5.20v1.73h-5.20zM60.61 39.83h3.46v1.73h-3.46zM67.54 39.83h3.46v1.73h-3.46zM0.00 41.56h13.85v1.73h-13.85zM15.59 41.56h1.73v1.73h-1.73zM20.78 41.56h6.93v1.73h-6.93zM29.44 41.56h1.73v1.73h-1.73zM38.10 41.56h1.73v1.73h-1.73zM41.56 41.56h1.73v1.73h-1.73zM46.76 41.56h1.73v1.73h-1.73zM51.95 41.56h3.46v1.73h-3.46zM57.15 41.56h1.73v1.73h-1.73zM60.61 41.56h1.73v1.73h-1.73zM64.07 41.56h3.46v1.73h-3.46zM69.27 41.56h1.73v1.73h-1.73zM0.00 43.29h10.39v1.73h-10.39zM15.59 43.29h1.73v1.73h-1.73zM19.05 43.29h3.46v1.73h-3.46zM24.24 43.29h1.73v1.73h-1.73zM27.71 43.29h1.73v1.73h-1.73zM32.90 43.29h1.73v1.73h-1.73zM38.10 43.29h1.73v1.73h-1.73zM41.56 43.29h1.73v1.73h-1.73zM46.76 43.29h1.73v1.73h-1.73zM50.22 43.29h3.46v1.73h-3.46zM55.41 43.29h1.73v1.73h-1.73zM58.88 43.29h1.73v1.73h-1.73zM67.54 43.29h3.46v1.73h-3.46zM0.00 45.02h3.46v1.73h-3.46zM5.20 45.02h3.46v1.73h-3.46zM10.39 45.02h3.46v1.73h-3.46zM15.59 45.02h10.39v1.73h-10.39zM29.44 45.02h1.73v1.73h-1.73zM32.90 45.02h3.46v1.73h-3.46zM38.10 45.02h5.20v1.73h-5.20zM48.49 45.02h5.20v1.73h-5.20zM57.15 45.02h1.73v1.73h-1.73zM60.61 45.02h1.73v1.73h-1.73zM65.80 45.02h1.73v1.73h-1.73zM69.27 45.02h1.73v1.73h-1.73zM0.00 46.76h6.93v1.73h-6.93zM8.66 46.76h1.73v1.73h-1.73zM13.85 46.76h3.46v1.73h-3.46zM19.05 46.76h1.73v1.73h-1.73zM24.24 46.76h6.93v1.73h-6.93zM36.37 46.76h1.73v1.73h-1.73zM41.56 46.76h1.73v1.73h-1.73zM45.02 46.76h10.39v1.73h-10.39zM62.34 46.76h5.20v1.73h-5.20zM69.27 46.76h1.73v1.73h-1.73zM0.00 48.49h1.73v1.73h-1.73zM5.20 48.49h1.73v1.73h-1.73zM8.66 48.49h5.20v1.73h-5.20zM19.05 48.49h1.73v1.73h-1.73zM22.51 48.49h3.46v1.73h-3.46zM34.63 48.49h1.73v1.73h-1.73zM41.56 48.49h1.73v1.73h-1.73zM46.76 48.49h3.46v1.73h-3.46zM51.95 48.49h1.73v1.73h-1.73zM55.41 48.49h5.20v1.73h-5.20zM62.34 48.49h6.93v1.73h-6.93zM5.20 50.22h1.73v1.73h-1.73zM8.66 50.22h1.73v1.73h-1.73zM15.59 50.22h1.73v1.73h-1.73zM22.51 50.22h6.93v1.73h-6.93zM38.10 50.22h5.20v1.73h-5.20zM45.02 50.22h10.39v1.73h-10.39zM57.15 50.22h3.46v1.73h-3.46zM62.34 50.22h1.73v1.73h-1.73zM67.54 50.22h3.46v1.73h-3.46zM0.00 51.95h1.73v1.73h-1.73zM3.46 51.95h1.73v1.73h-1.73zM6.93 51.95h6.93v1.73h-6.93zM15.59 51.95h5.20v1.73h-5.20zM24.24 51.95h5.20v1.73h-5.20zM31.17 51.95h5.20v1.73h-5.20zM38.10 51.95h1.73v1.73h-1.73zM41.56 51.95h3.46v1.73h-3.46zM46.76 51.95h3.46v1.73h-3.46zM51.95 51.95h1.73v1.73h-1.73zM60.61 51.95h5.20v1.73h-5.20zM67.54 51.95h1.73v1.73h-1.73zM0.00 53.68h5.20v1.73h-5.20zM6.93 53.68h3.46v1.73h-3.46zM12.12 53.68h5.20v1.73h-5.20zM22.51 53.68h5.20v1.73h-5.20zM32.90 53.68h3.46v1.73h-3.46zM39.83 53.68h3.46v1.73h-3.46zM45.02 53.68h5.20v1.73h-5.20zM53.68 53.68h13.85v1.73h-13.85zM0.00 55.41h1.73v1.73h-1.73zM3.46 55.41h3.46v1.73h-3.46zM10.39 55.41h5.20v1.73h-5.20zM17.32 55.41h8.66v1.73h-8.66zM29.44 55.41h1.73v1.73h-1.73zM32.90 55.41h3.46v1.73h-3.46zM38.10 55.41h1.73v1.73h-1.73zM43.29 55.41h1.73v1.73h-1.73zM48.49 55.41h3.46v1.73h-3.46zM55.41 55.41h12.12v1.73h-12.12zM69.27 55.41h1.73v1.73h-1.73zM13.85 57.15h1.73v1.73h-1.73zM19.05 57.15h1.73v1.73h-1.73zM24.24 57.15h3.46v1.73h-3.46zM29.44 57.15h5.20v1.73h-5.20zM38.10 57.15h3.46v1.73h-3.46zM43.29 57.15h1.73v1.73h-1.73zM46.76 57.15h1.73v1.73h-1.73zM51.95 57.15h5.20v1.73h-5.20zM62.34 57.15h3.46v1.73h-3.46zM67.54 57.15h3.46v1.73h-3.46zM0.00 58.88h12.12v1.73h-12.12zM13.85 58.88h1.73v1.73h-1.73zM19.05 58.88h3.46v1.73h-3.46zM24.24 58.88h5.20v1.73h-5.20zM34.63 58.88h1.73v1.73h-1.73zM38.10 58.88h1.73v1.73h-1.73zM41.56 58.88h1.73v1.73h-1.73zM48.49 58.88h8.66v1.73h-8.66zM58.88 58.88h1.73v1.73h-1.73zM62.34 58.88h8.66v1.73h-8.66zM0.00 60.61h1.73v1.73h-1.73zM10.39 60.61h1.73v1.73h-1.73zM13.85 60.61h1.73v1.73h-1.73zM19.05 60.61h1.73v1.73h-1.73zM25.98 60.61h1.73v1.73h-1.73zM31.17 60.61h3.46v1.73h-3.46zM38.10 60.61h6.93v1.73h-6.93zM46.76 60.61h3.46v1.73h-3.46zM53.68 60.61h3.46v1.73h-3.46zM62.34 60.61h1.73v1.73h-1.73zM67.54 60.61h1.73v1.73h-1.73zM0.00 62.34h1.73v1.73h-1.73zM3.46 62.34h5.20v1.73h-5.20zM10.39 62.34h1.73v1.73h-1.73zM13.85 62.34h12.12v1.73h-12.12zM27.71 62.34h1.73v1.73h-1.73zM31.17 62.34h1.73v1.73h-1.73zM38.10 62.34h3.46v1.73h-3.46zM43.29 62.34h1.73v1.73h-1.73zM48.49 62.34h1.73v1.73h-1.73zM55.41 62.34h10.39v1.73h-10.39zM69.27 62.34h1.73v1.73h-1.73zM0.00 64.07h1.73v1.73h-1.73zM3.46 64.07h5.20v1.73h-5.20zM10.39 64.07h1.73v1.73h-1.73zM13.85 64.07h1.73v1.73h-1.73zM17.32 64.07h1.73v1.73h-1.73zM20.78 64.07h6.93v1.73h-6.93zM32.90 64.07h5.20v1.73h-5.20zM43.29 64.07h1.73v1.73h-1.73zM48.49 64.07h8.66v1.73h-8.66zM0.00 65.80h1.73v1.73h-1.73zM3.46 65.80h5.20v1.73h-5.20zM10.39 65.80h1.73v1.73h-1.73zM13.85 65.80h3.46v1.73h-3.46zM22.51 65.80h1.73v1.73h-1.73zM29.44 65.80h8.66v1.73h-8.66zM41.56 65.80h1.73v1.73h-1.73zM45.02 65.80h3.46v1.73h-3.46zM53.68 65.80h5.20v1.73h-5.20zM64.07 65.80h5.20v1.73h-5.20zM0.00 67.54h1.73v1.73h-1.73zM10.39 67.54h1.73v1.73h-1.73zM15.59 67.54h3.46v1.73h-3.46zM20.78 67.54h1.73v1.73h-1.73zM24.24 67.54h3.46v1.73h-3.46zM34.63 67.54h1.73v1.73h-1.73zM39.83 67.54h1.73v1.73h-1.73zM43.29 67.54h1.73v1.73h-1.73zM48.49 67.54h3.46v1.73h-3.46zM55.41 67.54h3.46v1.73h-3.46zM60.61 67.54h1.73v1.73h-1.73zM64.07 67.54h5.20v1.73h-5.20zM0.00 69.27h12.12v1.73h-12.12zM13.85 69.27h1.73v1.73h-1.73zM22.51 69.27h3.46v1.73h-3.46zM31.17 69.27h1.73v1.73h-1.73zM39.83 69.27h3.46v1.73h-3.46zM45.02 69.27h1.73v1.73h-1.73zM53.68 69.27h6.93v1.73h-6.93zM65.80 69.27h1.73v1.73h-1.73z" fill="#16181c"/></svg>
<div class="abs" style="left:31.500px;top:32px;width:18.800px;height:17.400px;background:linear-gradient(135deg,#6a767c,#3c4e5e 45%,#6b6a58 70%,#2c3a3c);border:1px solid #e8e8e8;border-radius:2px"></div>
</div>

<svg class="abs" style="left:585.600px;top:209.100px" width="79.300" height="163.600" viewBox="0 0 79.4 163.7" preserveAspectRatio="none">
<defs>
<linearGradient id="sky" x1="0" y1="0" x2="0" y2="1"><stop offset="0" stop-color="#27459a"/><stop offset=".25" stop-color="#3259b0"/><stop offset=".5" stop-color="#4a76c6"/><stop offset=".75" stop-color="#6f98d6"/><stop offset="1" stop-color="#8fb2e2"/></linearGradient>
<linearGradient id="brz" x1="0" y1="0" x2="1" y2="0"><stop offset="0" stop-color="#4a3424"/><stop offset=".45" stop-color="#7a5c42"/><stop offset=".7" stop-color="#5a4230"/><stop offset="1" stop-color="#33241a"/></linearGradient>
<filter id="bl" x="-40%" y="-40%" width="180%" height="180%"><feGaussianBlur stdDeviation="3"/></filter>
<filter id="b1" x="-10%" y="-10%" width="120%" height="120%"><feGaussianBlur stdDeviation="0.55"/></filter>
</defs>
<rect width="79.4" height="163.7" fill="url(#sky)"/>
<g filter="url(#bl)" fill="#e9eef8">
<ellipse cx="77" cy="58" rx="8" ry="9"/>
<ellipse cx="6" cy="92" rx="12" ry="8" opacity=".75"/>
<ellipse cx="74" cy="96" rx="9" ry="6" opacity=".7"/>
<ellipse cx="8" cy="122" rx="12" ry="9" opacity=".8"/>
<ellipse cx="8" cy="148" rx="16" ry="12"/>
<ellipse cx="76" cy="135" rx="8" ry="22" opacity=".95"/>
<ellipse cx="40" cy="24" rx="16" ry="2.500" opacity=".3"/>
<ellipse cx="62" cy="36" rx="12" ry="2.500" opacity=".3"/>
</g>
<g filter="url(#b1)">
<path d="M50 116 C56 115 64 116 69.500 118 L70.500 163.700 L17 163.700 C17 158 20 154 27 151 L48 148z" fill="#3b2a1e"/>
<path d="M31 37.500 C36.500 37 40.500 41.500 40.500 47.500 C40.500 51 39.500 54.500 38 57.500 C42 59.500 47 60.500 52 61.500 C60 63.500 65.500 67.500 67.500 75 C69.500 85 69.500 102 68.500 117.500 L55 118.500 L54 144 C56 148 58 151 58 154 C52 158 44 160.500 38 160.500 L20 161.500 C18.500 158 20.500 154.500 24 151.500 L27.500 145.500 C25.500 137 22.500 127 19.500 117 C15.500 114.500 13.500 110.500 14.500 106.500 C16 101.500 22 99.500 28 99.500 L33.500 92 C30.500 92.500 27.500 92 25.500 90.500 C24.500 84 25 77 26.500 71.500 C24.500 69 23.500 65.500 24 62.500 C24.500 60 26 58.500 27.500 58 C24 55 22.500 51 22.500 47.500 C22.500 41.500 26 38 31 37.500z" fill="url(#brz)"/>
<path d="M36 117 L42 146 L38 150 L30 146 L34 132z" fill="#6f93cf"/>
<path d="M34 64 C36 72 36.500 82 35 92 L44 100 C44 88 42 74 40 62z" fill="#3a281c" opacity=".75"/>
<path d="M50 63 C58 65 63 69 64 76 C65.500 86 64 98 61.500 108" stroke="#c9ab8a" stroke-width="3.200" fill="none" opacity=".6" stroke-linecap="round"/>
<path d="M52 70 C54 80 52 90 47 98 C42 101 34 101 27 102" stroke="#b89878" stroke-width="3" fill="none" opacity=".55" stroke-linecap="round"/>
<path d="M18 106 C24 102.500 36 103 48 106" stroke="#c4a583" stroke-width="2.600" fill="none" opacity=".5" stroke-linecap="round"/>
<path d="M25.500 42.500 C28 38.500 35 38.500 38.500 43" stroke="#d0b290" stroke-width="2.400" fill="none" opacity=".65" stroke-linecap="round"/>
<path d="M23.500 47.500 L39.500 46.500" stroke="#241810" stroke-width="1.400" fill="none" opacity=".7"/>
<path d="M22 119 L30 144" stroke="#b89878" stroke-width="2.200" fill="none" opacity=".5" stroke-linecap="round"/>
<path d="M46 120 L47 144" stroke="#a08464" stroke-width="2" fill="none" opacity=".4" stroke-linecap="round"/>
<path d="M24 156 C32 152 44 152 54 154" stroke="#a08464" stroke-width="2" fill="none" opacity=".45"/>
<path d="M55 120 L54.500 148 L62 158" stroke="#1f150d" stroke-width="3" fill="none" opacity=".5"/>
</g>
</svg>

  </div>
  <div class="abs" style="left:823.400px;top:104px;width:10.400px;height:377px;background:#dbdbdb"></div>
<div class="abs" style="left:823.400px;top:105px;width:10.400px;height:8.300px;background:#f8f8f8"></div>
<div class="abs" style="left:823.400px;top:113.300px;width:10.400px;height:13.400px;background:#fcfcfc;border:1px solid #d2d2d2"></div>
<div class="abs" style="left:823.400px;top:472.200px;width:10.400px;height:9px;background:#f8f8f8"></div>
<svg class="abs" style="left:823.400px;top:104px" width="10.400" height="400" viewBox="0 0 10.400 400">
  <path d="M3 6.600l2.200-2.200l2.200 2.200z" fill="#444"/>
  <path d="M3 371.800l2.200 2.200l2.200-2.200z" fill="#444"/>
  <path d="M3 383.200l2.200-2.200l2.200 2.200M3 385.800l2.200-2.200l2.200 2.200" stroke="#555" stroke-width=".9" fill="none"/>
  <path d="M3 391.800l2.200 2.200l2.200-2.200M3 394.400l2.200 2.200l2.200-2.200" stroke="#555" stroke-width=".9" fill="none"/>
</svg>

  <div class="abs" style="left:0;top:517.500px;width:834px;height:1px;background:#c9c9c9"></div>
<div class="abs" style="left:0;top:518.500px;width:834px;height:24px;background:#e7e7e7"></div>
<div class="abs" style="left:-3px;top:523.500px;font-size:9.300px;color:#555;white-space:nowrap">此处添加备注</div>
<div class="abs" style="left:0;top:542.500px;width:834px;height:14px;background:#f7f7f7;border-top:1px solid #e0e0e0"></div>
<div class="abs" style="left:-3px;top:546.500px;font-size:7.600px;color:#444;white-space:nowrap">功能: 调查</div>
<div class="abs" style="left:601.700px;top:543.500px;width:26px;height:12.500px;background:#cfcfcf"></div>
<svg class="abs" style="left:560px;top:543px" width="274" height="13" viewBox="560 543 274 13" fill="none">
  <g stroke="#555" stroke-width=".8">
    <path d="M563.500 551.500h8M563.500 553.500h8M565 549.500l2.500-2.500l2.500 2.500"/>
    <rect x="609" y="546" width="10.500" height="7.500" stroke="#666"/><rect x="611" y="547.500" width="4" height="3" stroke="#777" stroke-width=".6"/>
    <rect x="636" y="546" width="3.200" height="3.200"/><rect x="641" y="546" width="3.200" height="3.200"/><rect x="636" y="550.500" width="3.200" height="3.200"/><rect x="641" y="550.500" width="3.200" height="3.200"/>
    <rect x="660.500" y="546" width="9.500" height="7.500"/><path d="M665.200 546v7.500M662 548h2M667 548h2" stroke-width=".7"/>
    <path d="M686 545.500h10M687 545.500v5h8v-5M691 550.500v3.500M689 554h4"/>
    <path d="M708 549.500h4" stroke="#777"/><path d="M716.500 549.500h63" stroke="#8a8a8a" stroke-width=".7"/><path d="M748.500 547.500v4" stroke="#777"/>
    <rect x="741.200" y="546" width="2.400" height="7" fill="#555" stroke="none"/>
    <path d="M784 549.500h4.500M786.200 547.300v4.500" stroke="#777"/>
    <path d="M825.800 545v9M821.500 549.500h8.600M824.300 546.500l1.500-1.500l1.500 1.500M824.300 552.500l1.500 1.500l1.500-1.500M823 548l-1.500 1.500l1.500 1.500M828.600 548l1.500 1.500l-1.500 1.500" stroke-width=".7"/>
    <rect x="823.800" y="547.500" width="4" height="4" fill="#f7f7f7"/>
  </g>
</svg>
<div class="abs" style="left:574.800px;top:545.800px;font-size:7.800px;color:#333;white-space:nowrap">备注</div>
<div class="abs" style="left:797px;top:545.800px;font-size:8px;color:#555;white-space:nowrap">82%</div>

</div>
<div id="panel">
  <div id="pov"></div>
  <!-- tile 1 : active speaker -->
<div class="abs" style="left:10.600px;top:7.600px;width:225.300px;height:127.700px;border-style:solid;border-color:#1db464;border-width:2.500px 1.300px 2px 2.800px;border-radius:4px;background:#222527;overflow:hidden">
  <svg class="abs" style="left:2.400px;top:0.800px" width="214.800" height="120.800" viewBox="0 0 215.4 120.8" preserveAspectRatio="none">
    <defs>
      <linearGradient id="wall" x1="0" y1="0" x2="1" y2="0"><stop offset="0" stop-color="#c6c8c4"/><stop offset=".03" stop-color="#d3d4d0"/><stop offset=".4" stop-color="#d0d1cd"/><stop offset=".75" stop-color="#c4c5c1"/><stop offset="1" stop-color="#b6b7b3"/></linearGradient>
      <linearGradient id="wallv" x1="0.2" y1="0" x2="0.8" y2="1"><stop offset="0" stop-color="#000" stop-opacity="0"/><stop offset=".45" stop-color="#000" stop-opacity=".03"/><stop offset="1" stop-color="#000" stop-opacity=".24"/></linearGradient>
      <linearGradient id="skin1" x1="0" y1="0" x2="1" y2="0"><stop offset="0" stop-color="#bb9076"/><stop offset=".45" stop-color="#cba189"/><stop offset="1" stop-color="#a57a62"/></linearGradient>
      <filter id="pbs" x="-50%" y="-20%" width="200%" height="140%"><feGaussianBlur stdDeviation="2.200"/></filter>
      <filter id="pb" x="-10%" y="-10%" width="120%" height="120%"><feGaussianBlur stdDeviation="0.75"/></filter>
    </defs>
    <rect width="215.4" height="120.8" fill="url(#wall)"/>
    <rect width="215.4" height="120.8" fill="url(#wallv)"/>
    <rect width="215.4" height="2.600" fill="#dcdcd9" opacity=".7"/><rect x="0" width="5" height="120.8" fill="#dadbd7" opacity=".5"/>
    <g filter="url(#pb)">
      <!-- jacket -->
      <path d="M44 120.800 C47 108 50 99 58 90 C64 84 74 79 82 73 L92 84 L122 84 L132 71.500 C138 77 146 84 150 89 C157 98 161 110 163.500 120.800z" fill="#1b1c1e"/>
      <path d="M60 96 q10-8 20-10 M58 108 q12-6 24-6 M134 88 q8 2 14 10 M130 100 q12 2 22 12 M70 118 q14-6 28-4" stroke="#36373a" stroke-width="1.600" fill="none" opacity=".8"/>
      <path d="M88 84 L104 120.800 L118 120.800 L126 84z" fill="#0e0e10"/>
      <!-- neck -->
      <path d="M92 80 L124 80 L120 96 L108 102 L97 96z" fill="#9c7058"/>
      <!-- ears -->
      <ellipse cx="83" cy="60" rx="2.600" ry="6.500" fill="#b3856b"/>
      <ellipse cx="131" cy="60" rx="2.600" ry="6.500" fill="#9f745d"/>
      <!-- face -->
      <path d="M84 46 C84 30 94 23 107 23 C120 23 130.500 30 130.500 46 L130.500 64 C130 78 123 90 113 95 C109 96.800 105 96.800 101 95 C91 90 84.500 78 84 64z" fill="url(#skin1)"/>
      <path d="M119 38 C128 46 130 60 128 76 C126 86 119 93 112 96 C121 84 123 60 119 38z" fill="#8a5f4a" opacity=".5" filter="url(#pbs)"/>
      <!-- hair -->
      <path d="M82.500 56 C79 36 88 20.300 106 20.300 C124 20.300 134 34 131.500 56 L129.500 52 C130 42 126 36 121 33 C112 29.500 100 29.500 92 34 C87 38 85.500 44 85 52z" fill="#1a1a1d"/>
      <!-- glasses -->
      <path d="M84.500 53.500 L130.500 53.500" stroke="#2e2c2e" stroke-width="1.700" opacity=".9"/>
      <rect x="86.500" y="53" width="18" height="11.500" rx="3.500" fill="none" stroke="#3a3636" stroke-width="1.100" opacity=".85"/>
      <rect x="110.500" y="53" width="18" height="11.500" rx="3.500" fill="none" stroke="#3a3636" stroke-width="1.100" opacity=".85"/>
      <!-- features -->
      <path d="M92 58.500 h7 M116 58.500 h7" stroke="#3a2a22" stroke-width="1.500" opacity=".85"/>
      <path d="M103 70 q4.500 2.500 9 0" stroke="#8c604c" stroke-width="1.300" fill="none" opacity=".8"/>
      <path d="M100 79.500 q7.500 -2 15 0 q-7.500 3.500 -15 0z" fill="#8a4f48" opacity=".85"/>
      <path d="M90 49.500 q5.500-2 11-.3 M113 49.200 q5.500-1.700 11 .3" stroke="#2a2020" stroke-width="1.500" fill="none" opacity=".8"/>
    </g>
  </svg>
  <div class="nm" style="left:2.400px;bottom:1.600px;width:62px;height:26.600px;background:rgba(40,40,42,.72)">
    <svg width="22" height="24" viewBox="0 0 22 24" style="left:4.500px;top:1.300px">
      <rect x="6.900" y="2" width="8.200" height="15.400" rx="4.100" fill="#fff"/>
      <path d="M7.100 12.400h7.800v1.200a3.900 3.900 0 0 1-7.800 0z" fill="#62dd6c"/>
      <path d="M3.200 12.800a7.800 7.800 0 0 0 15.600 0" fill="none" stroke="#fff" stroke-width="2.300" stroke-linecap="round"/>
      <path d="M11 20.600v1.800" stroke="#fff" stroke-width="2.600" stroke-linecap="round"/>
    </svg>
    <span style="left:32.300px;top:7.200px;letter-spacing:.3px">赵新元</span>
  </div>
</div>

<!-- tile 2 -->
<div class="tile" style="top:146.200px;background:#1a1b1d">
  <div class="abs" style="left:1.600px;top:0.600px;width:215.700px;height:120.500px;overflow:hidden;background:#c3143f">
    <svg class="abs" style="left:0;top:0" width="216.500" height="121" viewBox="0 0 216.500 121">
      <defs>
        <radialGradient id="rg2" cx=".85" cy=".65" r=".55"><stop offset="0" stop-color="#e0607c" stop-opacity=".75"/><stop offset="1" stop-color="#c3143f" stop-opacity="0"/></radialGradient>
        <filter id="lg2" x="-10%" y="-10%" width="120%" height="120%"><feGaussianBlur stdDeviation="0.450"/></filter>
        <filter id="sp2" x="-20%" y="-20%" width="140%" height="140%"><feGaussianBlur stdDeviation="1.400"/></filter>
        <linearGradient id="bgr" x1="0" y1="0" x2="1" y2="1"><stop offset="0" stop-color="#c51242"/><stop offset=".6" stop-color="#c8163f"/><stop offset="1" stop-color="#b8183c"/></linearGradient>
      </defs>
      <rect width="216.500" height="121" fill="url(#bgr)"/>
      <rect width="216.500" height="121" fill="url(#rg2)"/>
      <circle cx="208" cy="74" r="47" fill="#e07890" opacity=".26"/>
      <circle cx="208" cy="74" r="47" fill="none" stroke="#ee9aac" stroke-width="1.500" opacity=".35"/>
      <path d="M170 30 q14 10 10 30 M186 24 q10 20 2 44" stroke="#e88aa0" stroke-width="2.500" fill="none" opacity=".3"/>
      <g filter="url(#sp2)" fill="#f3b6c4" opacity=".55"><rect x="172" y="102" width="8" height="14"/><rect x="183" y="98" width="6" height="20"/><rect x="192" y="104" width="9" height="14"/><rect x="204" y="100" width="6" height="18"/><rect x="168" y="112" width="48" height="9"/></g>
      <!-- logo -->
      <g transform="translate(5.500,5.500)" filter="url(#lg2)">
        <path d="M2 12 q-2-5 4-6 q6-1 10 2" stroke="#f6e6ec" stroke-width="1.600" fill="none"/>
        <path d="M3 14 q10 5 22 1 q5-2 9-1" stroke="#f2f2f6" stroke-width="2.200" fill="none"/>
        <rect x="9" y="6" width="6" height="7" fill="#3a5cb0"/>
        <rect x="9.500" y="9" width="5" height="2" fill="#d03a4a"/>
        <path d="M17 8 q0-7 5-7 q5 0 4 7" stroke="#f2c37a" stroke-width="1.800" fill="none"/>
        <circle cx="21" cy="10" r="3" fill="#f0f0f6"/><circle cx="25" cy="9" r="2.200" fill="#2a3c8c"/>
        <path d="M29 9 L35 2.500" stroke="#f2b86a" stroke-width="2.400" stroke-linecap="round"/>
        <path d="M8 16 q8 3 18 0" stroke="#4aa6d8" stroke-width="1.600" fill="none"/>
        <rect x="10" y="19" width="12" height="1.400" fill="#f3dfe6" opacity=".7"/><rect x="10" y="22" width="10" height="1" fill="#f3dfe6" opacity=".45"/>
      </g>
    </svg>
    <div class="abs gold" style="right:7.500px;top:10.300px;font-size:10.200px;font-weight:700;letter-spacing:0px">基金项目申报专题报告</div>
    <div class="abs gold" style="left:41.400px;top:36.700px;font-size:13.200px;font-weight:900">国家自然科学基金项目</div>
    <div class="abs gold" style="left:55.300px;top:56.400px;font-size:13.200px;font-weight:900">申请的教训与反思</div>
    <svg class="abs" style="left:0;top:0" width="216.500" height="121" viewBox="0 0 216.500 121">
      <defs>
        <linearGradient id="skin2" x1="0" y1="0" x2="1" y2="0"><stop offset="0" stop-color="#d9ad96"/><stop offset=".5" stop-color="#e8c2ac"/><stop offset="1" stop-color="#cfa18a"/></linearGradient>
        <filter id="pb2" x="-10%" y="-10%" width="120%" height="120%"><feGaussianBlur stdDeviation="0.7"/></filter>
      </defs>
      <g filter="url(#pb2)">
        <!-- sweater -->
        <path d="M46 121 C49 106 53 96 61.500 90.500 L85 75.500 L98 86 L122 86 L132 75.500 L156.500 88.500 C165 94 169.500 106 173 121z" fill="#131517"/>
        <!-- neck -->
        <path d="M92 66 L128 66 L129 82 C120 91 100 91 91 82z" fill="#cfa08a"/>
        <path d="M88 79 C98 91 122 91 132 79 L136 83 C124 96 96 96 84 83z" fill="#0c0d0f"/>
        <!-- ears -->
        <ellipse cx="82.500" cy="44" rx="2.800" ry="7" fill="#d5a590"/>
        <ellipse cx="136.500" cy="44" rx="2.800" ry="7" fill="#c59682"/>
        <!-- face -->
        <path d="M83.500 30 C83.500 14 95 8 109.500 8 C124 8 135.500 14 135.500 30 L135.500 48 C135 62 127 75 115 80 C111.500 81.500 107.500 81.500 104 80 C92 75 84 62 83.500 48z" fill="url(#skin2)"/>
        <!-- hair -->
        <path d="M79.500 46 C72 16 88 0.500 110 0.500 C132 0.500 147 14 140.500 43 L136.500 42 C138 33 136 27 131 22 C119 27 101 26 90 20 C86 25 84 32 84 44z" fill="#17181b"/>
        <!-- glasses -->
        <path d="M84 34.500 L135.500 34.500" stroke="#4a4042" stroke-width="1.200" opacity=".85"/>
        <rect x="86" y="32.500" width="20.500" height="12.500" rx="3.500" fill="#f3dccf" fill-opacity=".3" stroke="#4a4042" stroke-width="1.100" opacity=".85"/>
        <rect x="113.500" y="32.500" width="20.500" height="12.500" rx="3.500" fill="#f3dccf" fill-opacity=".3" stroke="#4a4042" stroke-width="1.100" opacity=".85"/>
        <path d="M92 38.500 h8.500 M119.500 38.500 h8.500" stroke="#4a3630" stroke-width="1.400" opacity=".8"/>
        <path d="M89 29.500 q7.500-2.500 15-.5 M116 29 q7.500-2 15 .5" stroke="#2a2224" stroke-width="1.700" fill="none" opacity=".75"/>
        <path d="M105 52.500 q4.500 2.500 9 0" stroke="#b98670" stroke-width="1.300" fill="none" opacity=".8"/>
        <path d="M101 62.500 q8.500 -2 17 0 q-8.500 3.500 -17 0z" fill="#b56a68" opacity=".85"/>
        <!-- earphones -->
        <path d="M85.500 76 C86 96 100 108 105 121" stroke="#d8dadc" stroke-width="1.100" fill="none"/>
        <path d="M138.500 78 C142 96 140 108 141 121" stroke="#d8dadc" stroke-width="1.100" fill="none"/>
      </g>
    </svg>
  </div>
  <div class="nm" style="left:1.600px;bottom:2.100px;width:68px;height:26.700px">
    <svg width="22" height="24" viewBox="0 0 22 24" style="left:5.300px;top:1.500px"><rect x="6.900" y="2" width="8.200" height="15" rx="4.100" fill="#fff"/>
      <path d="M3.200 12.800a7.800 7.800 0 0 0 15.600 0" fill="none" stroke="#fff" stroke-width="2.200" stroke-linecap="round"/>
      <path d="M11 20.600v1.600" stroke="#fff" stroke-width="2.600" stroke-linecap="round"/>
      <path d="M18.600 4.700L3 20" stroke="#1d1d1f" stroke-width="4"/>
      <path d="M18.800 4.500L2.700 20.200" stroke="#e2524c" stroke-width="2.100" stroke-linecap="round"/></svg>
    <span style="left:31.500px;top:6.200px">黄勇</span>
  </div>
</div>

<!-- tile 3 -->
<div class="tile" style="top:284.400px">
  <div class="av" style="top:15.800px">
    <svg width="71" height="71" viewBox="0 0 71 71">
      <defs>
        <linearGradient id="sea" x1="0" y1="0" x2="0" y2="1"><stop offset="0" stop-color="#0b3484"/><stop offset=".2" stop-color="#1a50a6"/><stop offset=".38" stop-color="#3f7ccc"/><stop offset=".5" stop-color="#8fa6d8"/><stop offset=".58" stop-color="#e2b6c6"/><stop offset=".66" stop-color="#f3e4e6"/><stop offset=".715" stop-color="#eef0f4"/><stop offset=".735" stop-color="#2a4c7c"/><stop offset=".85" stop-color="#1e3c68"/><stop offset="1" stop-color="#7f98b8"/></linearGradient>
        <linearGradient id="sail" x1="0" y1="0" x2="1" y2="0"><stop offset="0" stop-color="#e6bd86"/><stop offset=".6" stop-color="#c98f56"/><stop offset="1" stop-color="#8e5428"/></linearGradient>
        <filter id="ab" x="-10%" y="-10%" width="120%" height="120%"><feGaussianBlur stdDeviation="0.8"/></filter>
      </defs>
      <rect width="71" height="71" fill="url(#sea)"/>
      <g filter="url(#ab)">
        <path d="M4 57 q6-2 12 0 t12 0 t12 0 M10 63 q8-2.500 16 0 t16 0 M20 68 q8-2 16 0 t14 0" stroke="#c6d4e6" stroke-width="1.400" fill="none" opacity=".75"/>
        <!-- left sails -->
        <path d="M40 28 C45 26.500 50 28 51 33 L51.500 40 C47 38 42 39 38.500 41 C40.500 36 39 32 40 28z" fill="url(#sail)"/>
        <path d="M38 42 C43 39.500 49 40 52 43 L52 52 C47 50 41 51 36 54 C38.500 50 37 46 38 42z" fill="url(#sail)"/>
        <!-- right sails -->
        <path d="M55 23 C60 20.500 65 23 66 29 L66.500 38 C62 36 57 37 53.500 39 C56 33 54 28 55 23z" fill="url(#sail)"/>
        <path d="M54 40 C59 37.500 64 38 67 41 L66 51 C61 49 57 50 53 52 C55 48 53 44 54 40z" fill="url(#sail)"/>
        <!-- hull -->
        <path d="M42 52 C46 50 52 53 58 51 L64 47 C64 56 58 63 50 62 C46 61.500 43 58 42 52z" fill="#5c2410"/>
        <path d="M50 52 C54 53 57 57 55 61" stroke="#f0c89a" stroke-width="2.200" fill="none" opacity=".85"/>
        <path d="M36 45.500 H67" stroke="#f6ece6" stroke-width=".9" opacity=".85"/>
        <path d="M45.500 26 V52 M60.500 21 V50" stroke="#4a2a16" stroke-width=".9"/>
      </g>
    </svg>
  </div>
  <div class="nm" style="left:0.300px;bottom:1.700px;width:70px;height:27.200px;border-top-right-radius:2px">
    <svg width="22" height="24" viewBox="0 0 22 24" style="left:5.300px;top:1.800px"><rect x="6.900" y="2" width="8.200" height="15" rx="4.100" fill="#fff"/>
      <path d="M3.200 12.800a7.800 7.800 0 0 0 15.600 0" fill="none" stroke="#fff" stroke-width="2.200" stroke-linecap="round"/>
      <path d="M11 20.600v1.600" stroke="#fff" stroke-width="2.600" stroke-linecap="round"/>
      <path d="M18.600 4.700L3 20" stroke="#1d1d1f" stroke-width="4"/>
      <path d="M18.800 4.500L2.700 20.200" stroke="#e2524c" stroke-width="2.100" stroke-linecap="round"/></svg>
    <span style="left:32px;top:6.600px">董青</span>
  </div>
</div>

<!-- tile 4 -->
<div class="tile" style="top:422.600px">
  <div class="av" style="top:15.600px">
    <svg width="71" height="71" viewBox="0 0 71 71">
      <defs>
        <linearGradient id="wood" x1="0" y1="0" x2="0" y2="1"><stop offset="0" stop-color="#e4e4da"/><stop offset=".3" stop-color="#e6e0c0"/><stop offset=".5" stop-color="#ece4ae"/><stop offset=".6" stop-color="#d8cc7a"/><stop offset=".64" stop-color="#8c8c2c"/><stop offset=".8" stop-color="#8e9230"/><stop offset="1" stop-color="#6c7020"/></linearGradient>
        <radialGradient id="sun" cx=".5" cy=".19" r=".3"><stop offset="0" stop-color="#fffdf0"/><stop offset=".22" stop-color="#fff6c8" stop-opacity=".95"/><stop offset="1" stop-color="#fff4c0" stop-opacity="0"/></radialGradient>
        <linearGradient id="skyr" x1="0" y1="0" x2="1" y2="0"><stop offset="0" stop-color="#fff" stop-opacity="0"/><stop offset=".55" stop-color="#fff" stop-opacity="0"/><stop offset="1" stop-color="#fff" stop-opacity=".7"/></linearGradient>
        <filter id="ab2" x="-10%" y="-10%" width="120%" height="120%"><feGaussianBlur stdDeviation="0.7"/></filter>
        <filter id="ab3" x="-20%" y="-20%" width="140%" height="140%"><feGaussianBlur stdDeviation="1.600"/></filter>
      </defs>
      <rect width="71" height="71" fill="url(#wood)"/>
      <rect width="71" height="22" fill="url(#skyr)"/>
      <g filter="url(#ab3)" fill="#4a382a" opacity=".8">
        <ellipse cx="5" cy="27" rx="7" ry="11"/><ellipse cx="15" cy="21" rx="8" ry="13"/><ellipse cx="27" cy="19" rx="7" ry="13"/><ellipse cx="44" cy="20" rx="8" ry="13"/><ellipse cx="56" cy="25" rx="7" ry="10"/><ellipse cx="66" cy="29" rx="6" ry="9"/><ellipse cx="36" cy="28" rx="4" ry="8" opacity=".5"/>
      </g>
      <rect width="71" height="71" fill="url(#sun)"/>
      <g filter="url(#ab2)">
        <path d="M3 24V43M8 18V43M12.500 22V43M17 10V43M22 14V43M25.500 20V43M32 12V44M36 24V43M42 9V44M48 16V43M54 18V43M58 22V43M63 24V43M66.500 28V43" stroke="#33251a" stroke-width="1.600"/>
        <path d="M17 24l-5-9M17 20l5-9M32 26l-5-10M32 22l4-9M42 24l-5-11M42 20l5-9M8 28l-4-7M25.500 28l4-7M54 28l-4-8M54 26l4-7M63 32l3-6M48 26l-3-7" stroke="#3a2a1c" stroke-width="1" opacity=".85"/>
        <path d="M17 43 L2 56 M22 43 L6 62 M32 44 L24 71 M32 44 L34 71 M42 44 L52 68 M42 44 L46 71 M48 43 L64 60 M8 43 L0 50 M58 43 L70 54 M25.500 43 L12 68" stroke="#34380e" stroke-width="3.200" opacity=".72"/>
      </g>
    </svg>
  </div>
  <div class="nm" style="left:0.300px;bottom:1.800px;width:83.400px;height:27.600px;border-top-right-radius:2px">
    <svg width="22" height="24" viewBox="0 0 22 24" style="left:5.300px;top:2px"><rect x="6.900" y="2" width="8.200" height="15" rx="4.100" fill="#fff"/>
      <path d="M3.200 12.800a7.800 7.800 0 0 0 15.600 0" fill="none" stroke="#fff" stroke-width="2.200" stroke-linecap="round"/>
      <path d="M11 20.600v1.600" stroke="#fff" stroke-width="2.600" stroke-linecap="round"/>
      <path d="M18.600 4.700L3 20" stroke="#1d1d1f" stroke-width="4"/>
      <path d="M18.800 4.500L2.700 20.200" stroke="#e2524c" stroke-width="2.100" stroke-linecap="round"/></svg>
    <span style="left:32px;top:6.800px">魏宝祥</span>
  </div>
</div>
<!-- tile 5 top edge -->
<div class="tile" style="top:559.800px"></div>


</div>
<div class="abs" style="left:0;top:556.500px;width:833.800px;height:4.500px;background:#19191b"></div>
</body>
</html>
